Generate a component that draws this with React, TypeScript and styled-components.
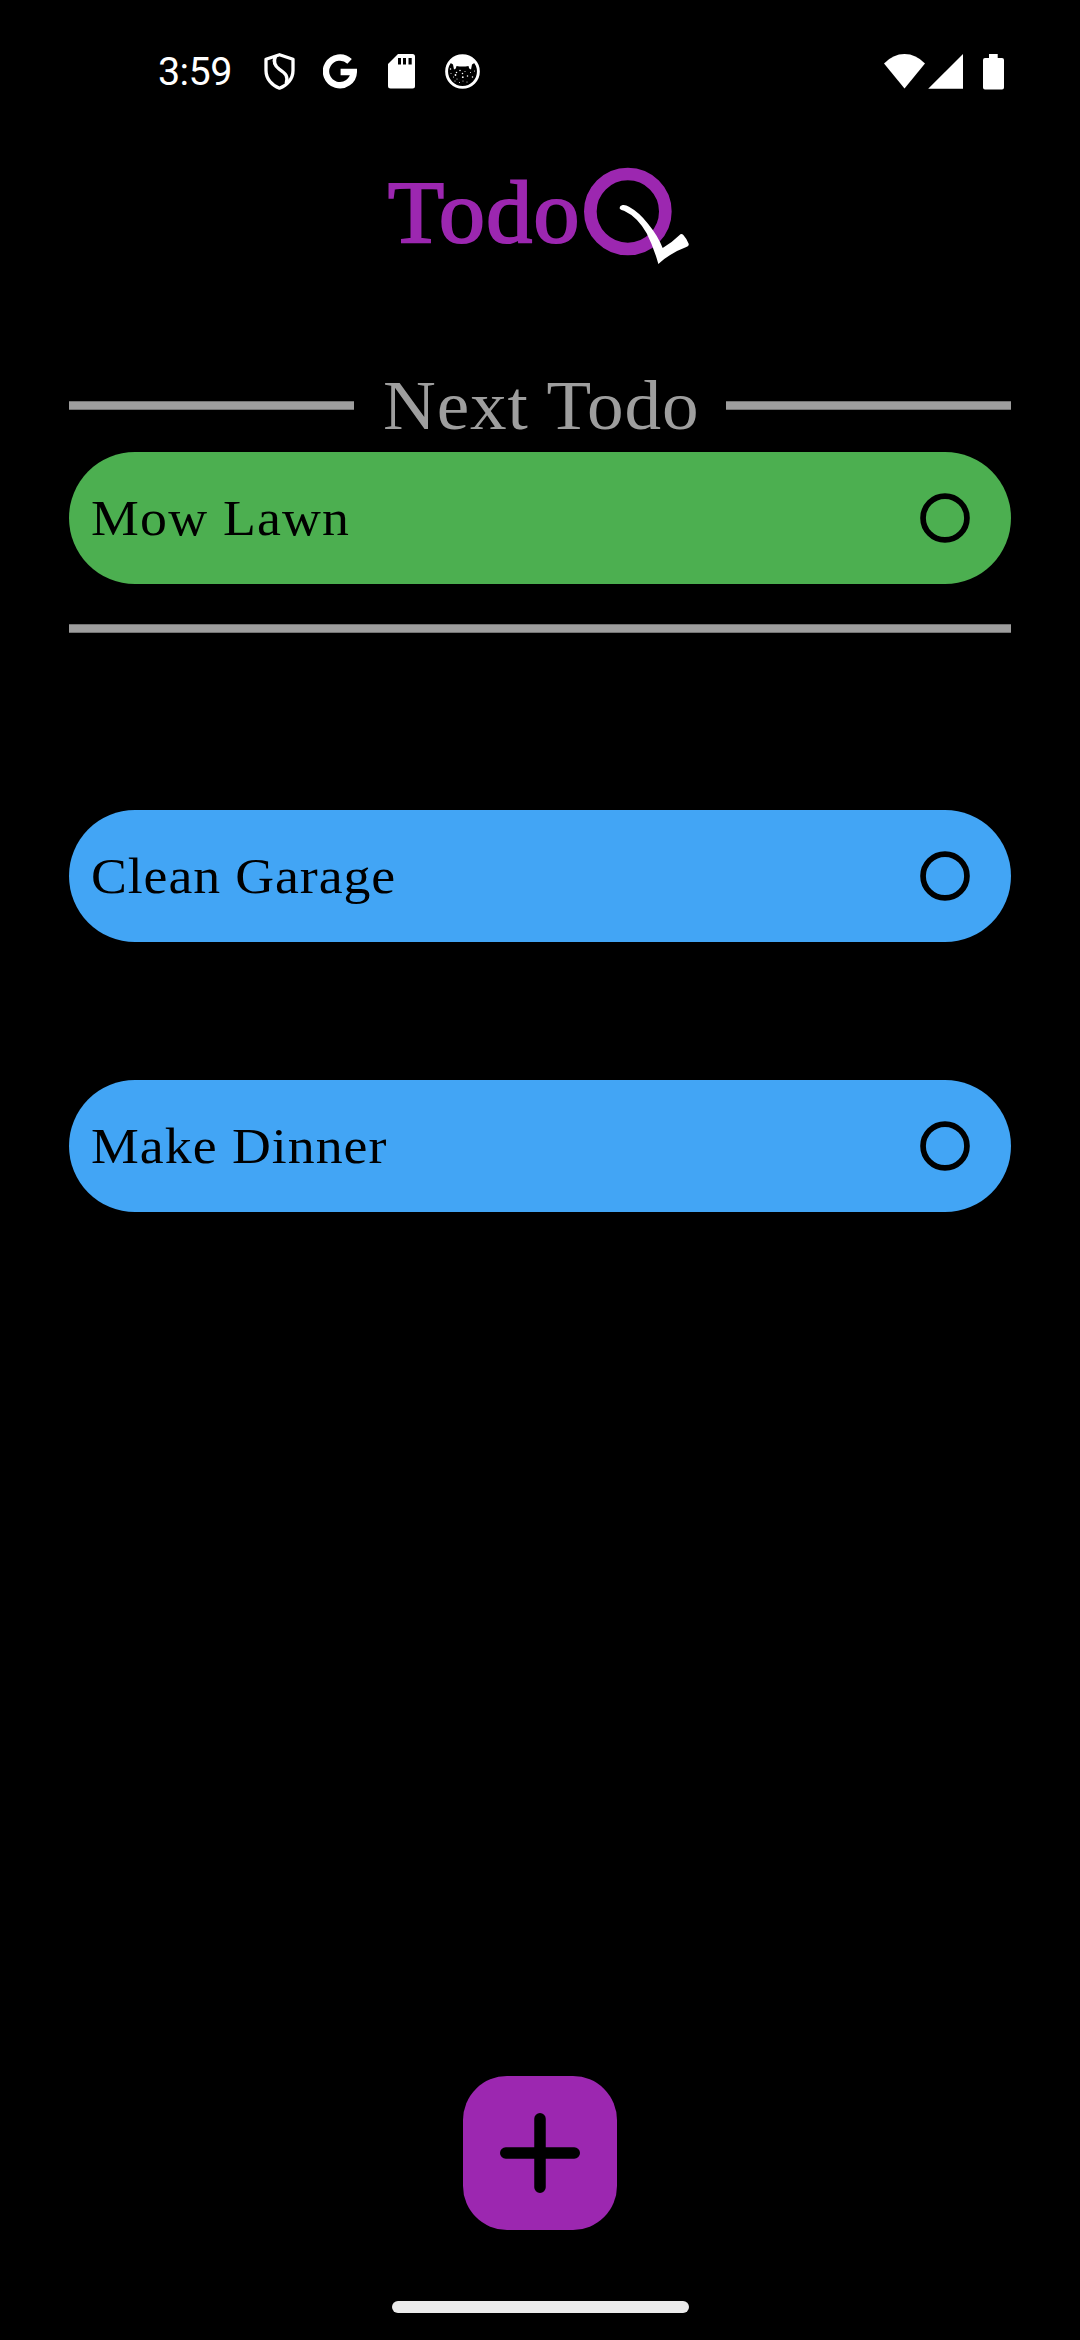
import React from "react";
import styled, { createGlobalStyle } from "styled-components";

const GlobalStyle = createGlobalStyle`
  * { box-sizing: border-box; }
  html, body { margin: 0; background: #000; }
`;

const purple = "#9c27b0";
const grey = "#9e9e9e";
const serif = `"Liberation Serif", "Times New Roman", serif`;

const Screen = styled.div`
  display: flex;
  flex-direction: column;
  width: 1080px;
  height: 2340px;
  overflow: hidden;
  background: #000;
`;

const StatusBar = styled.header`
  display: flex;
  justify-content: space-between;
  height: 142px;
  padding: 50px 76px 0 158px;
`;

const StatusGroup = styled.div`
  display: flex;
  align-items: center;
  height: 43px;
`;

const Clock = styled.time`
  width: 106px;
  color: #fff;
  font: 400 39.5px/43px Roboto, sans-serif;
  letter-spacing: -0.6px;
`;

const Glyph = styled.svg<{ $gap?: number }>`
  display: block;
  flex: none;
  margin-right: ${(p) => p.$gap ?? 0}px;
`;

const Logo = styled.h1`
  display: flex;
  align-items: flex-start;
  height: 223px;
  margin: 0;
  padding: 20px 0 0 388px;
`;

const LogoText = styled.span`
  width: 195px;
  color: ${purple};
  font: 400 89px/100px ${serif};
  letter-spacing: 1.4px;
  -webkit-text-stroke: 2.2px ${purple};
  transform: scaleX(1.03);
  transform-origin: left;
  white-space: nowrap;
`;

const LogoMark = styled.svg`
  display: block;
  flex: none;
  margin-top: 4px;
`;

const Content = styled.main`
  display: flex;
  flex-direction: column;
  padding: 0 69px;
`;

const Divider = styled.div`
  display: flex;
  align-items: center;
  justify-content: space-between;
  height: 81px;
  margin-bottom: 6px;
`;

const Rule = styled.div<{ $width: string }>`
  width: ${(p) => p.$width};
  height: 9px;
  flex: none;
  background: ${grey};
  border: solid #747474;
  border-width: 1px 0;
`;

const SectionTitle = styled.h2`
  flex: none;
  width: 315px;
  margin: 0;
  color: ${grey};
  font: 400 70px/80px ${serif};
  letter-spacing: 0.85px;
  transform: scaleX(1.045);
  transform-origin: left;
  white-space: nowrap;
`;

const Card = styled.article<{ $color: string; $after: number }>`
  display: flex;
  align-items: center;
  justify-content: space-between;
  height: 132px;
  margin-bottom: ${(p) => p.$after}px;
  padding: 0 41px 0 22px;
  border-radius: 66px;
  background: ${(p) => p.$color};
`;

const CardTitle = styled.span<{ $track: number }>`
  color: #000;
  font: 400 51.5px/60px ${serif};
  letter-spacing: ${(p) => p.$track}px;
  transform: scaleX(1.045);
  transform-origin: left;
  white-space: nowrap;
`;

const Check = styled.button`
  width: 50px;
  height: 50px;
  padding: 0;
  border: 0;
  background: transparent;

  svg { display: block; }
`;

const Queue = styled.section`
  display: flex;
  flex-direction: column;
  padding-top: 177px;
`;

const Footer = styled.footer`
  display: flex;
  flex-direction: column;
  align-items: center;
  margin-top: auto;
  padding-bottom: 27px;
`;

const AddButton = styled.button`
  display: grid;
  place-items: center;
  width: 154px;
  height: 154px;
  margin-bottom: 71px;
  padding: 0;
  border: 0;
  border-radius: 44px;
  background: ${purple};
`;

const HomeBar = styled.div`
  width: 297px;
  height: 12px;
  border-radius: 6px;
  background: #ebebeb;
`;

type TodoProps = { title: string; color: string; track: number; after?: number };

const Todo = ({ title, color, track, after = 0 }: TodoProps) => (
  <Card $color={color} $after={after}>
    <CardTitle $track={track}>{title}</CardTitle>
    <Check aria-label={`Complete ${title}`}>
      <svg width="50" height="50" viewBox="0 0 50 50" fill="none" stroke="#000" strokeWidth="5.7">
        <circle cx="25" cy="25" r="21.950" />
      </svg>
    </Check>
  </Card>
);

const ShieldIcon = () => (
  <Glyph $gap={28} width="31" height="37" viewBox="0 0 31 37" fill="none" stroke="#fff" strokeWidth="3.300" strokeLinejoin="round">
    <path d="M15.500 1.700 29 6.200V17.500C29 26 23 32.500 15.500 35.200 8 32.500 2 26 2 17.500V6.200Z" />
    <path d="M11.500 3.300C9.200 8.500 10.200 12.500 15.200 16.200 22 20.800 24.200 23 22.300 30.500" strokeWidth="3.400" />
    <path d="M10.400 4.500C9.500 7 9.600 8.700 10.300 11M23 24.500Q23.600 28 21.800 30.600" strokeWidth="2" />
  </Glyph>
);

const GoogleIcon = () => (
  <Glyph $gap={31} width="34" height="35" viewBox="0 0 34 35" fill="none" stroke="#fff" strokeWidth="6.400">
    <path d="M26.600 7.400A13.900 13.900 0 1 0 30.800 18H17.600" />
  </Glyph>
);

const SdIcon = () => (
  <Glyph $gap={30} width="27" height="35" viewBox="0 0 27 35">
    <path fill="#fff" d="M10 0H24.500Q27 0 27 2.500V32Q27 34.500 24.500 34.500H2.500Q0 34.500 0 32V10Z" />
    <path fill="#000" d="M10 4h3v6.600h-3zM15 4h3v6.600h-3zM20.500 4h3.200v6.600h-3.200z" />
  </Glyph>
);

const specks = [
  [5.5, 15], [6, 19.5], [8.5, 23], [11.5, 18.5], [12, 25], [14.5, 28.5], [17.5, 19.5], [18, 27],
  [20, 17.5], [22.5, 22], [22, 28], [25.5, 18.5], [27.5, 23], [29.5, 17], [10, 27], [15, 16.5],
];

const CatIcon = () => (
  <Glyph width="35" height="35" viewBox="0 0 35 35">
    <circle cx="17.500" cy="17.500" r="15.900" fill="none" stroke="#fff" strokeWidth="2.900" />
    <path
      fill="#fff"
      d="M4 8.500Q17.500-5.500 31 8.500L28.500 9.500 27 10.500 26 15.500 24.200 14.500 23.500 12Q17.500 13 11.500 12L10.800 14.500 9 15.500 8 10.500 6.500 9.500Z"
    />
    <g fill="#fff">
      {specks.map(([x, y], i) => (
        <circle key={i} cx={x} cy={y} r={i % 3 === 0 ? 0.75 : 0.5} />
      ))}
      <circle cx="10.500" cy="21" r="0.900" />
      <circle cx="17.800" cy="23.200" r="0.900" />
    </g>
  </Glyph>
);

export default function App() {
  return (
    <>
      <GlobalStyle />
      <Screen>
        <StatusBar>
          <StatusGroup>
            <Clock>3:59</Clock>
            <ShieldIcon />
            <GoogleIcon />
            <SdIcon />
            <CatIcon />
          </StatusGroup>
          <StatusGroup>
            <Glyph $gap={3} width="41" height="36" viewBox="0 0 41 36" fill="#fff">
              <path d="M0 9.500Q9 0 20.500 0T41 9.500L20.500 34.500Z" />
            </Glyph>
            <Glyph $gap={20} width="35" height="36" viewBox="0 0 35 36" fill="#fff">
              <path d="M35 0V34.700H.200Z" />
            </Glyph>
            <Glyph width="21" height="36" viewBox="0 0 21 36" fill="#fff">
              <path d="M6 0h8.700v4H19q2 0 2 2V33.500q0 2-2 2H2q-2 0-2-2V6q0-2 2-2h4z" />
            </Glyph>
          </StatusGroup>
        </StatusBar>

        <Logo aria-label="TodoQ">
          <LogoText>Todo</LogoText>
          <LogoMark width="107" height="99" viewBox="610 48 321 297">
            <circle cx="744.500" cy="184.500" r="112.500" fill="none" stroke={purple} strokeWidth="38" />
            <path
              fill="#fff"
              d="M721 177Q717 168 729 165Q739 164 748 170Q779 187 805 221Q836 259 849 294Q877 278 899 256Q905 249 911 255Q921 266 927 281Q929 288 920 291Q873 308 836 342Q823 294 801 250Q774 201 733 182Q724 181 721 177Z"
            />
          </LogoMark>
        </Logo>

        <Content>
          <Divider>
            <Rule $width="285px" />
            <SectionTitle>Next Todo</SectionTitle>
            <Rule $width="285px" />
          </Divider>
          <Todo title="Mow Lawn" color="#4caf50" track={1.15} after={40} />
          <Rule $width="100%" />
          <Queue>
            <Todo title="Clean Garage" color="#42a5f5" track={0.85} after={138} />
            <Todo title="Make Dinner" color="#42a5f5" track={0.95} />
          </Queue>
        </Content>

        <Footer>
          <AddButton aria-label="Add todo">
            <svg width="80" height="80" viewBox="0 0 80 80" fill="none" stroke="#000" strokeWidth="11.500" strokeLinecap="round">
              <path d="M5.750 40h68.500M40 5.750v68.500" />
            </svg>
          </AddButton>
          <HomeBar />
        </Footer>
      </Screen>
    </>
  );
}
